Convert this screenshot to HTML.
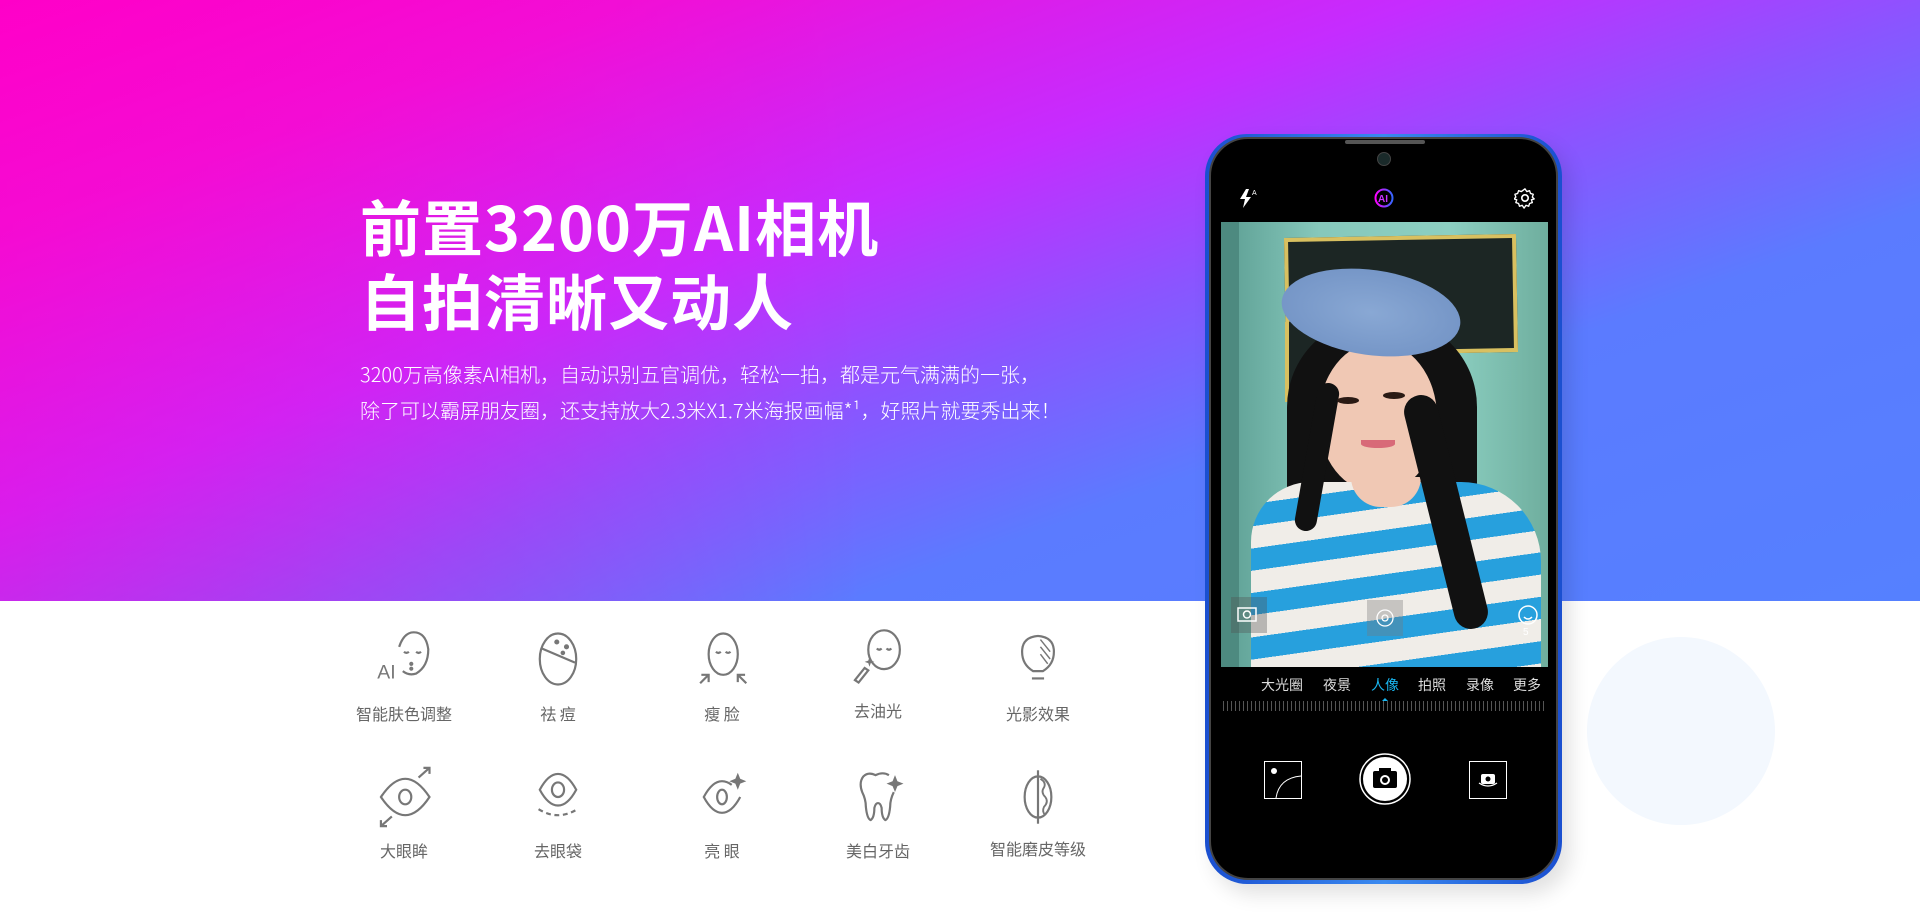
<!DOCTYPE html>
<html><head><meta charset="utf-8">
<style>
*{margin:0;padding:0;box-sizing:border-box}
body{width:1920px;height:922px;overflow:hidden;background:#fff;position:relative;font-family:"Liberation Sans","Noto Sans CJK SC",sans-serif}
.hero{position:absolute;left:0;top:0;width:1920px;height:601px;background:linear-gradient(160deg,#ff00c8 0%,#f010d8 18%,#c52cff 40%,#8a55ff 55%,#5b7bff 70%,#5580ff 100%)}
.hero:before{content:"";position:absolute;inset:0;background:linear-gradient(90deg,rgba(255,0,200,.35) 0%,rgba(255,0,200,0) 45%)}
.t{position:absolute;left:360px;color:#fff;font-family:"Noto Sans CJK SC",sans-serif;font-weight:700;font-size:61px;line-height:74px;top:188px;white-space:nowrap;letter-spacing:1px}
.p{position:absolute;left:360px;top:356px;color:#fff;font-family:"Noto Sans CJK SC",sans-serif;font-size:20px;line-height:36px;white-space:nowrap;font-weight:300}
.circ{position:absolute;left:1587px;top:637px;width:188px;height:188px;border-radius:50%;background:#f3f8fe}
.phone{position:absolute;left:1205px;top:134px;width:357px;height:750px;border-radius:42px;background:linear-gradient(90deg,#1a4fd0,#3a8af0 50%,#1a4fd0);box-shadow:8px 10px 20px rgba(0,0,0,.12)}
.inner{position:absolute;left:4px;top:3px;right:4px;bottom:4px;border-radius:39px;background:#000;border:2px solid #444}
.photo{position:absolute;left:1221px;top:222px;width:327px;height:445px;overflow:hidden;background:linear-gradient(90deg,#5c9e93,#86c8bb 30%,#8ccfc1 70%,#6fae9e)}
.lbl{position:absolute;color:#666;font-size:16px;font-family:"Noto Sans CJK SC",sans-serif;transform:translateX(-50%);white-space:nowrap;top:701px}
.lbl2{top:838px}
.ic{position:absolute;width:68px;height:68px;transform:translate(-50%,-50%)}
.mode{position:absolute;top:675px;color:#ddd;font-size:14px;font-family:"Noto Sans CJK SC",sans-serif;transform:translateX(-50%)}
</style></head><body>
<div class="hero"></div>
<div class="t">前置3200万AI相机<br>自拍清晰又动人</div>
<div class="p">3200万高像素AI相机，自动识别五官调优，轻松一拍，都是元气满满的一张，<br>除了可以霸屏朋友圈，还支持放大2.3米X1.7米海报画幅*¹，好照片就要秀出来！</div>
<div class="circ"></div>

<div class="phone"><div class="inner"></div></div>
<div style="position:absolute;left:1345px;top:140px;width:80px;height:4px;background:#555;border-radius:2px"></div>
<div style="position:absolute;left:1377px;top:152px;width:14px;height:14px;border-radius:50%;background:#1a2a2a;border:1px solid #444"></div>
<svg style="position:absolute;left:1236px;top:186px" width="24" height="24" viewBox="0 0 24 24"><path d="M10 3L4 13h5l-2 9 8-11h-5l3-8z" fill="#fff"/><text x="16" y="9" fill="#fff" font-size="7" font-family="Liberation Sans">A</text></svg>
<svg style="position:absolute;left:1373px;top:187px" width="22" height="22" viewBox="0 0 22 22"><circle cx="11" cy="11" r="8.5" fill="none" stroke="url(#g)" stroke-width="2"/><defs><linearGradient id="g"><stop offset="0" stop-color="#f0f"/><stop offset="1" stop-color="#36f"/></linearGradient></defs><text x="5" y="15" fill="#c3f" font-size="10" font-weight="700" font-family="Liberation Sans">AI</text></svg>
<svg style="position:absolute;left:1514px;top:187px" width="22" height="22" viewBox="0 0 24 24"><circle cx="12" cy="12" r="3.5" fill="none" stroke="#fff" stroke-width="1.8"/><path d="M12 2l2 3 3-1 1 3 3 1-1 3 2 2-3 1 1 3-3 1-1 3-3-1-2 3-2-3-3 1-1-3-3-1 1-3-3-1 2-2-1-3 3-1 1-3 3 1z" fill="none" stroke="#fff" stroke-width="1.5" stroke-linejoin="round"/></svg>

<div class="photo">
  <div style="position:absolute;left:0;top:0;width:18px;height:445px;background:#4d8a80"></div>
  <div style="position:absolute;left:64px;top:14px;width:232px;height:118px;background:#1c2624;border:4px solid #d8c060;transform:rotate(-1deg)"></div>
  <div style="position:absolute;left:64px;top:100px;width:115px;height:80px;background:#1c2624;border-left:4px solid #d8c060"></div>
  <div style="position:absolute;left:66px;top:95px;width:190px;height:330px;background:#111;border-radius:90px 90px 40px 60px"></div>
  <div style="position:absolute;left:98px;top:120px;width:118px;height:150px;background:#f0c8b4;border-radius:50% 50% 48% 48%"></div>
  <div style="position:absolute;left:60px;top:48px;width:180px;height:85px;background:radial-gradient(#89a8d4,#6e8fc2);border-radius:50%;transform:rotate(8deg)"></div>
  <div style="position:absolute;left:30px;top:260px;width:290px;height:200px;border-radius:60px 80px 0 0;background:repeating-linear-gradient(172deg,#f0ede8 0 22px,#27a0dd 22px 44px)"></div>
  <div style="position:absolute;left:130px;top:255px;width:70px;height:30px;background:#f0c8b4;border-radius:0 0 40px 40px"></div>
  <div style="position:absolute;left:208px;top:170px;width:34px;height:240px;background:#111;border-radius:20px;transform:rotate(-14deg)"></div>
  <div style="position:absolute;left:85px;top:160px;width:22px;height:150px;background:#111;border-radius:15px;transform:rotate(10deg)"></div>
  <div style="position:absolute;left:116px;top:175px;width:22px;height:7px;background:#2a1a14;border-radius:50%"></div>
  <div style="position:absolute;left:162px;top:170px;width:22px;height:7px;background:#2a1a14;border-radius:50%"></div>
  <div style="position:absolute;left:140px;top:218px;width:34px;height:8px;background:#d86a78;border-radius:0 0 50% 50%"></div>
  <svg style="position:absolute;left:303px;top:-18px" width="20" height="20"><circle cx="10" cy="10" r="7" fill="none" stroke="#fff" stroke-width="1.5"/></svg>
  <div style="position:absolute;left:10px;top:375px;width:36px;height:36px;background:rgba(80,80,80,.35)"></div>
  <svg style="position:absolute;left:16px;top:385px" width="20" height="15"><rect x="1" y="1" width="18" height="13" fill="none" stroke="#fff" stroke-width="1.5"/><circle cx="10" cy="7.5" r="3.5" fill="none" stroke="#fff" stroke-width="1.5"/></svg>
  <div style="position:absolute;left:146px;top:378px;width:36px;height:36px;background:rgba(120,120,120,.35)"></div>
  <svg style="position:absolute;left:154px;top:386px" width="20" height="20"><circle cx="10" cy="10" r="8" fill="none" stroke="#fff" stroke-width="1.3"/><circle cx="10" cy="10" r="3" fill="none" stroke="#fff" stroke-width="1.3"/></svg>
  <svg style="position:absolute;left:296px;top:382px" width="22" height="22"><circle cx="11" cy="11" r="9" fill="none" stroke="#fff" stroke-width="1.5"/><path d="M7 13q4 4 8 0" fill="none" stroke="#fff" stroke-width="1.5"/></svg>
  <div style="position:absolute;left:302px;top:405px;color:#fff;font-size:10px">5</div>
</div>
<div class="mode" style="left:1282px">大光圈</div>
<div class="mode" style="left:1337px">夜景</div>
<div class="mode" style="left:1385px;color:#19b6f0">人像</div>
<div style="position:absolute;left:1382px;top:695px;border:3px solid transparent;border-bottom-color:#19b6f0"></div>
<div class="mode" style="left:1432px">拍照</div>
<div class="mode" style="left:1480px">录像</div>
<div class="mode" style="left:1527px">更多</div>
<div style="position:absolute;left:1223px;top:701px;width:322px;height:10px;background:repeating-linear-gradient(90deg,#555 0 1px,transparent 1px 4px)"></div>
<svg style="position:absolute;left:1264px;top:761px" width="38" height="38"><rect x="0.5" y="0.5" width="37" height="37" fill="none" stroke="#fff"/><circle cx="10" cy="10" r="3" fill="#fff"/><path d="M12 37q3-20 25-22" fill="none" stroke="#fff"/></svg>
<svg style="position:absolute;left:1359px;top:753px" width="52" height="52"><circle cx="26" cy="26" r="25" fill="none" stroke="#fff" stroke-width="1.5"/><circle cx="26" cy="26" r="22" fill="#fff"/><rect x="14" y="18" width="24" height="17" rx="2" fill="#000"/><rect x="20" y="15" width="12" height="5" fill="#000"/><circle cx="26" cy="27" r="5" fill="#fff"/><circle cx="26" cy="27" r="3" fill="#000"/></svg>
<svg style="position:absolute;left:1469px;top:761px" width="38" height="38"><rect x="0.5" y="0.5" width="37" height="37" fill="none" stroke="#fff"/><rect x="12" y="13" width="14" height="10" rx="2" fill="#fff"/><circle cx="19" cy="18" r="2.5" fill="#000"/><path d="M10 22q9 6 18 0" fill="none" stroke="#fff" stroke-width="1.3"/></svg>

<svg class="ic" style="left:404px;top:659px" viewBox="0 0 56 56" fill="none" stroke="#777" stroke-width="1.8"><path d="M24 18q4-12 12-12q10 0 12 14q0 14-10 20q-6 2-11-2"/><path d="M28 22q2 2 4 0M38 22q2 2 4 0"/><circle cx="34" cy="32" r="0.8"/><circle cx="34" cy="36" r="0.8"/><text x="6" y="44" fill="#777" stroke="none" font-size="16" font-family="Liberation Sans">AI</text></svg>
<svg class="ic" style="left:558px;top:659px" viewBox="0 0 56 56" fill="none" stroke="#777" stroke-width="1.8"><ellipse cx="28" cy="28" rx="15" ry="21"/><path d="M14 19l28 12"/><circle cx="27" cy="14" r="1.2" fill="#777"/><circle cx="35" cy="18" r="1.2" fill="#777"/><circle cx="32" cy="23" r="1" fill="#777"/></svg>
<svg class="ic" style="left:722px;top:659px" viewBox="0 0 56 56" fill="none" stroke="#777" stroke-width="1.8"><ellipse cx="29" cy="24" rx="12" ry="17"/><path d="M23 22q2 2 4 0M31 22q2 2 4 0"/><path d="M10 48l7-7M11 41h6v6M48 48l-7-7M47 41h-6v6"/></svg>
<svg class="ic" style="left:878px;top:657px" viewBox="0 0 56 56" fill="none" stroke="#777" stroke-width="1.8"><ellipse cx="33" cy="22" rx="13" ry="16"/><path d="M27 21q2 2 4 0M35 21q2 2 4 0"/><path d="M9 47l8-10 3 2-8 10z"/><path d="M20 31l1-3 1 3 3 1-3 1-1 3-1-3-3-1z" fill="#777" stroke="none"/></svg>
<svg class="ic" style="left:1038px;top:659px" viewBox="0 0 56 56" fill="none" stroke="#777" stroke-width="1.8"><path d="M24 38q-10-6-9-18q1-10 13-11q12 1 13 11q1 12-9 18z"/><path d="M23 44h10"/><path d="M30 12l8 10M30 18l8 10M30 24l6 8" stroke-width="1.2"/></svg>
<svg class="ic" style="left:404px;top:797px" viewBox="0 0 56 56" fill="none" stroke="#777" stroke-width="1.8"><path d="M9 28q10-15 20-15t20 15q-10 15-20 15t-20-15z"/><ellipse cx="29" cy="28" rx="5" ry="6"/><path d="M40 12l9-8M44 4h5v5M18 44l-9 8M9 47v5h5"/></svg>
<svg class="ic" style="left:558px;top:797px" viewBox="0 0 56 56" fill="none" stroke="#777" stroke-width="1.8"><path d="M13 22q7-13 15-13t15 13q-7 13-15 13t-15-13z"/><ellipse cx="28" cy="22" rx="5" ry="6"/><path d="M12 38q16 10 32 0" stroke-dasharray="4 3"/></svg>
<svg class="ic" style="left:722px;top:797px" viewBox="0 0 56 56" fill="none" stroke="#777" stroke-width="1.8"><path d="M36 18q-4-3-8-3q-8 0-15 13q7 13 15 13t15-13"/><ellipse cx="28" cy="28" rx="4" ry="6"/><path d="M41 8l2 5 5 2-5 2-2 5-2-5-5-2 5-2z" fill="#777" stroke="none"/></svg>
<svg class="ic" style="left:878px;top:797px" viewBox="0 0 56 56" fill="none" stroke="#777" stroke-width="1.8"><path d="M37 10q-5-3-11 0q-6-3-10 1q-4 5-1 13q3 6 3 12q1 10 4 11q3-2 3-10q1-4 3-4q2 0 3 4q0 8 3 10q3-1 4-11q0-6 3-12"/><path d="M42 10l2 5 5 2-5 2-2 5-2-5-5-2 5-2z" fill="#777" stroke="none"/></svg>
<svg class="ic" style="left:1038px;top:797px" viewBox="0 0 56 56" fill="none" stroke="#777" stroke-width="1.8"><ellipse cx="28" cy="28" rx="11" ry="17"/><path d="M28 6v44"/><path d="M30 13q5 3 3 7q-3 4 1 8q3 4-1 8q-2 4 1 7" stroke-width="1.5"/></svg>

<div class="lbl" style="left:404px">智能肤色调整</div>
<div class="lbl" style="left:558px">祛 痘</div>
<div class="lbl" style="left:722px">瘦 脸</div>
<div class="lbl" style="left:878px;top:698px">去油光</div>
<div class="lbl" style="left:1038px">光影效果</div>
<div class="lbl lbl2" style="left:404px">大眼眸</div>
<div class="lbl lbl2" style="left:558px">去眼袋</div>
<div class="lbl lbl2" style="left:722px">亮 眼</div>
<div class="lbl lbl2" style="left:878px">美白牙齿</div>
<div class="lbl lbl2" style="left:1038px;top:836px">智能磨皮等级</div>
</body></html>
